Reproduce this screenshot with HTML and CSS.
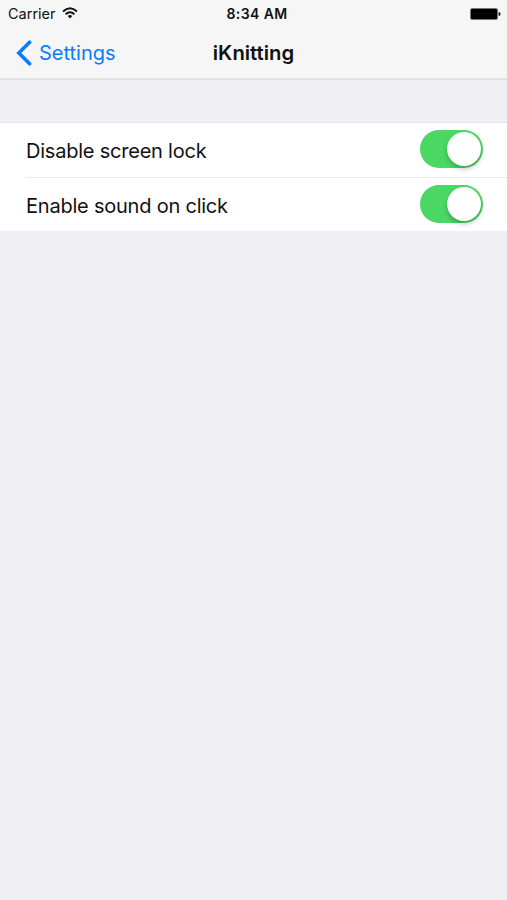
FILE: index.html
```html
<!DOCTYPE html>
<html lang="en">
<head>
<meta charset="utf-8">
<title>iKnitting</title>
<link rel="stylesheet" href="styles.css">
</head>
<body>
<header class="top">
  <div class="status">
    <div class="carrier">
      <span class="carrier-name">Carrier</span>
      <svg class="wifi" viewBox="0 0 16 12" fill="none" stroke="#111" stroke-width="2">
        <path d="M1 4.5Q8-1.9 15 4.5"/>
        <path d="M3.6 7.3Q8 3.3 12.4 7.3"/>
        <path d="M5.7 9Q8 7.1 10.3 9L8 11.5Z" fill="#111" stroke="none"/>
      </svg>
    </div>
    <span class="time">8:34 AM</span>
    <svg class="battery" viewBox="0 0 31 12">
      <rect x=".5" y=".5" width="27" height="11" rx="1.6" fill="#000" stroke="#777" stroke-width=".8"/>
      <path d="M28.6 4a2 2 0 0 1 0 4Z" fill="#111"/>
    </svg>
  </div>
  <nav class="nav">
    <a class="back">
      <svg class="chevron" viewBox="0 0 16 26" fill="none" stroke="#087dfc" stroke-width="3.6" stroke-linecap="round"><path d="M13.6 2.2 2.8 13l10.8 10.8"/></svg>
      <span class="back-label">Settings</span>
    </a>
    <h1 class="title"><span class="title-text">iKnitting</span></h1>
  </nav>
</header>
<main class="group">
  <div class="row"><span class="label">Disable screen lock</span><span class="switch"><span class="knob"></span></span></div>
  <div class="row"><span class="label">Enable sound on click</span><span class="switch"><span class="knob"></span></span></div>
</main>
</body>
</html>
```
FILE: styles.css
```css
* { box-sizing: border-box; }
body { margin: 0; min-height: 900px; background: #efeff4; color: #111; font-family: Inter, "Liberation Sans", sans-serif; }
.top { height: 80px; background: #f6f6f7; border-bottom: 2px solid #e2e2e5; }
.status { height: 27px; display: grid; grid-template-columns: 1fr auto 1fr; align-items: center; padding: 0 6px 0 8px; font-size: 14px; }
.carrier { display: flex; align-items: center; gap: 6px; }
.carrier-name { font-size: 14.5px; }
.wifi { width: 16px; height: 12px; margin-top: -2px; }
.time { font-weight: 600; letter-spacing: .4px; padding-left: 5px; }
.battery { width: 31px; height: 12px; justify-self: end; }
.nav { height: 51px; display: grid; grid-template-columns: 1fr auto 1fr; align-items: center; padding: 0 16px; }
.back { display: flex; align-items: center; gap: 7px; color: #087dfc; font-size: 20px; }
.chevron { width: 16px; height: 26px; }
.title { margin: 0; font-size: 20.3px; font-weight: 600; margin-top: -1px; }
.group { margin-top: 43px; background: #fff; box-shadow: 0 -1px #e6e6ea; padding-left: 26px; }
.row { height: 55px; display: flex; align-items: center; justify-content: space-between; padding: 0 24px 3px 0; }
.row + .row { height: 53px; padding: 0 24px 1px 0; box-shadow: 0 -1px #e9e9eb; }
.label { font-size: 20px; letter-spacing: -.22px; padding-top: 4px; }
.switch { width: 63px; height: 38px; border-radius: 19px; background: #4bd763; display: flex; justify-content: flex-end; align-items: center; padding-right: 2px; }
.knob { width: 34px; height: 34px; border-radius: 50%; background: #fff; box-shadow: 0 3px 5px rgba(0,0,0,.22); }
```
